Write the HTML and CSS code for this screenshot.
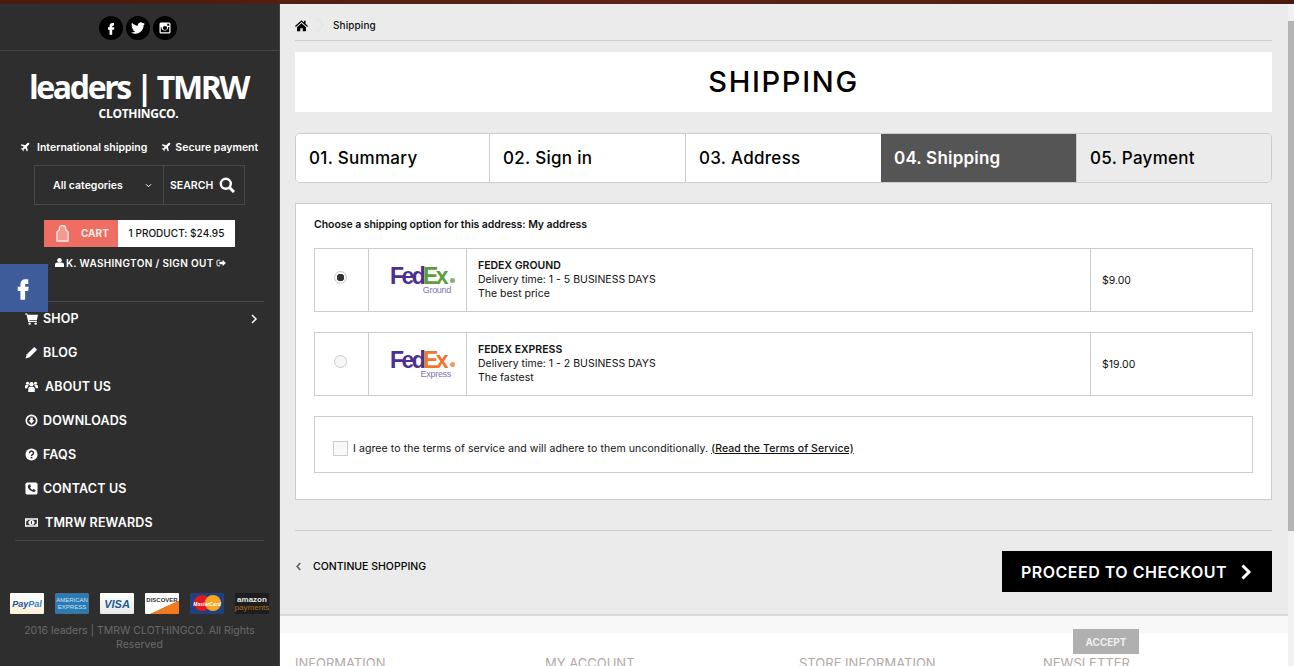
FILE: index.html
```html
<!DOCTYPE html>
<html lang="en">
<head>
<meta charset="utf-8">
<title>Shipping</title>
<link rel="stylesheet" href="styles.css">
</head>
<body>
<div class="topstrip"></div>
<div class="layout">
  <aside class="sidebar">
    <div class="socials">
      <span class="circle"><svg viewBox="0 0 24 24" width="16" height="16"><path fill="#fff" d="M14 8.5h2.500V4.500H14c-2.500 0-4.200 1.800-4.200 4.200V11H7.500v3.500h2.300V22h4v-7.500h2.600l.5-3.500h-3.100V9.300c0-.5.200-.8.700-.8z"/></svg></span>
      <span class="circle"><svg viewBox="0 0 24 24" width="14" height="14"><path fill="#fff" d="M23.953 4.57a10 10 0 01-2.825.775 4.958 4.958 0 002.163-2.723c-.951.555-2.005.959-3.127 1.184a4.92 4.92 0 00-8.384 4.482C7.69 8.095 4.067 6.13 1.64 3.162a4.822 4.822 0 00-.666 2.475c0 1.71.87 3.213 2.188 4.096a4.904 4.904 0 01-2.228-.616v.06a4.923 4.923 0 003.946 4.827 4.996 4.996 0 01-2.212.085 4.936 4.936 0 004.604 3.417 9.867 9.867 0 01-6.102 2.105c-.39 0-.779-.023-1.17-.067a13.995 13.995 0 007.557 2.209c9.053 0 13.998-7.496 13.998-13.985 0-.21 0-.42-.015-.63A9.935 9.935 0 0024 4.59z"/></svg></span>
      <span class="circle"><svg viewBox="0 0 24 24" width="12" height="12"><path fill="#fff" fill-rule="evenodd" d="M4 1h16a3 3 0 013 3v16a3 3 0 01-3 3H4a3 3 0 01-3-3V4a3 3 0 013-3zm12.500 2.500v4h4v-4zM3.500 10v10c0 .3.200.5.5.5h16c.3 0 .5-.2.5-.5V10h-2.200a6.700 6.700 0 11-13.600 0zM12 7.800a4.200 4.200 0 100 8.400 4.200 4.200 0 000-8.400z"/></svg></span>
    </div>
    <div class="brand">
      <div class="brand-name">leaders | TMRW</div>
      <div class="brand-sub">CLOTHINGCO.</div>
    </div>
    <div class="perks">
      <span class="perk perk-first"><svg class="plane" viewBox="0 0 16 16"><use href="#i-plane"/></svg>International shipping</span>
      <span class="perk"><svg class="plane" viewBox="0 0 16 16"><use href="#i-plane"/></svg>Secure payment</span>
    </div>
    <div class="searchbox">
      <div class="search-cat"><span>All categories</span><svg viewBox="0 0 8 6" width="7" height="5"><path d="M1 1.500l3 3 3-3" fill="none" stroke="#fff" stroke-width="1.200"/></svg></div>
      <div class="search-btn"><span>SEARCH</span><svg viewBox="0 0 16 16" width="16" height="16"><circle cx="6.800" cy="6.800" r="5" fill="none" stroke="#fff" stroke-width="2.400"/><path d="M10.500 10.500l4.500 4.500" stroke="#fff" stroke-width="3"/></svg></div>
    </div>
    <div class="cart">
      <div class="cart-left"><svg viewBox="0 0 14 18" width="13" height="17"><path d="M1 17V7.500L3.500 5V4a3.500 3.500 0 017 0v1l2.500 2.500V17z" fill="#f49a91" stroke="#fbe6e3" stroke-width="1.500"/></svg><span>CART</span></div>
      <div class="cart-right">1 PRODUCT: $24.95</div>
    </div>
    <div class="userline"><svg viewBox="0 0 12 12" width="9" height="9"><circle cx="6" cy="3" r="3" fill="#fff"/><path d="M0 12V9c0-2 1.500-3 3-3h6c1.500 0 3 1 3 3v3z" fill="#fff"/></svg><span>K. WASHINGTON / SIGN OUT</span><svg viewBox="0 0 12 10" width="10" height="8"><path d="M5 1.500H2a1 1 0 00-1 1v5a1 1 0 001 1h3" fill="none" stroke="#fff" stroke-width="1.200"/><path d="M4 3.500h4V1l4 4-4 4V6.500H4z" fill="#fff"/></svg></div>
    <nav class="menu">
      <a class="menu-item"><svg viewBox="0 0 14 14"><path fill="#fff" d="M0 1.500h2.500l.5 1.500h11l-1.200 5.500H4.500l.3 1h8v1.300H3.500L1.600 2.800H0z"/><circle cx="5" cy="12.500" r="1.300" fill="#fff"/><circle cx="11.500" cy="12.500" r="1.300" fill="#fff"/></svg><span class="menu-label">SHOP</span><svg class="chev" viewBox="0 0 8 10"><path d="M2 1l4 4-4 4" fill="none" stroke="#fff" stroke-width="1.500"/></svg></a>
      <a class="menu-item"><svg viewBox="0 0 14 14"><path fill="#fff" d="M10 1l3 3-8 8-4.500 1.500L2 9z"/></svg><span class="menu-label">BLOG</span></a>
      <a class="menu-item wide"><svg viewBox="0 0 14 14"><circle cx="7" cy="4.500" r="2.300" fill="#fff"/><circle cx="2.700" cy="3.500" r="1.700" fill="#fff"/><circle cx="11.300" cy="3.500" r="1.700" fill="#fff"/><path fill="#fff" d="M3.500 13V9.500c0-1.500 1-2.200 2-2.200h3c1 0 2 .7 2 2.200V13zM0 9V7c0-1 .7-1.500 1.500-1.500H4L2.500 8v1zM14 9V7c0-1-.7-1.500-1.500-1.500H10L11.500 8v1z"/></svg><span class="menu-label">ABOUT US</span></a>
      <a class="menu-item"><svg viewBox="0 0 14 14"><circle cx="7" cy="7" r="5.600" fill="none" stroke="#fff" stroke-width="1.800"/><path fill="#fff" d="M5.700 3.800h2.600v3h1.800L7 10.400 3.900 6.800h1.800z"/></svg><span class="menu-label">DOWNLOADS</span></a>
      <a class="menu-item"><svg viewBox="0 0 14 14"><circle cx="7" cy="7" r="6.500" fill="#fff"/><path d="M4.800 5.500a2.200 2 0 114 1c-.8.600-1.800 1-1.800 2.200" fill="none" stroke="#2e2e2e" stroke-width="1.600"/><rect x="6.100" y="9.500" width="1.800" height="1.700" fill="#2e2e2e"/></svg><span class="menu-label">FAQS</span></a>
      <a class="menu-item"><svg viewBox="0 0 14 14"><rect x=".5" y=".5" width="13" height="13" rx="2" fill="#fff"/><path d="M4 3l1.500-.5 1 2.500-1 1c.5 1.200 1.300 2 2.500 2.500l1-1 2.500 1-.5 1.500c-.5.800-1.800.8-3 .3C5.500 9.500 4 8 3.200 6 2.800 4.800 3.200 3.500 4 3z" fill="#2e2e2e"/></svg><span class="menu-label">CONTACT US</span></a>
      <a class="menu-item wide"><svg viewBox="0 0 14 14"><path fill="#fff" fill-rule="evenodd" d="M0 2.500h14v9H0zM1.300 4v6h11.400V4z"/><ellipse cx="7" cy="7" rx="3.300" ry="2.700" fill="#fff"/><rect x="6.400" y="5.500" width="1.200" height="3" fill="#2e2e2e"/><rect x="1.300" y="4" width="1.500" height="1.500" fill="#fff"/><rect x="11.200" y="8.500" width="1.500" height="1.500" fill="#fff"/></svg><span class="menu-label">TMRW REWARDS</span></a>
    </nav>
    <div class="cards">
      <span class="card card-paypal"><i>Pay</i><b>Pal</b></span>
      <span class="card card-amex">AMERICAN<br>EXPRESS</span>
      <span class="card card-visa">VISA</span>
      <span class="card card-discover">DISCOVER</span>
      <span class="card card-mc"><em class="mc-red"></em><em class="mc-yellow"></em><span class="mc-text">MasterCard</span></span>
      <span class="card card-amazon"><span class="az-top">amazon</span><span class="az-bot">payments</span></span>
    </div>
    <p class="copyright">2016 leaders | TMRW CLOTHINGCO. All Rights Reserved</p>
  </aside>

  <main class="main">
    <div class="content">
      <div class="breadcrumb">
        <svg viewBox="0 0 16 16" width="13" height="13"><path d="M8 1.500L0 8.500l1 1.200L8 3.700l7 6 1-1.200-3-2.600V2h-2v2.200zM2.500 10L8 5.300l5.500 4.700v5H9.500v-3.500h-3V15h-4z" fill="#000"/></svg>
        <svg class="crumb-sep" viewBox="0 0 8 16" width="8" height="16"><path d="M1 1l6 7-6 7" fill="none" stroke="#e0e0e0"/></svg>
        <span>Shipping</span>
      </div>
      <h1 class="title">SHIPPING</h1>
      <ol class="steps">
        <li class="step s1">01. Summary</li>
        <li class="step s2">02. Sign in</li>
        <li class="step s3">03. Address</li>
        <li class="step s4">04. Shipping</li>
        <li class="step s5">05. Payment</li>
      </ol>
      <section class="panel">
        <p class="choose">Choose a shipping option for this address: My address</p>
        <div class="option">
          <div class="opt-radio"><span class="radio checked"></span></div>
          <div class="opt-logo"><div class="fedex"><span class="fx-line"><span class="fed">Fed</span><span class="ex green">Ex</span><span class="dot green-dot"></span></span><span class="fx-sub">Ground</span></div></div>
          <div class="opt-text"><strong>FEDEX GROUND</strong><span>Delivery time: 1 - 5 BUSINESS DAYS</span><span>The best price</span></div>
          <div class="opt-price">$9.00</div>
        </div>
        <div class="option">
          <div class="opt-radio"><span class="radio"></span></div>
          <div class="opt-logo"><div class="fedex"><span class="fx-line"><span class="fed">Fed</span><span class="ex orange">Ex</span><span class="dot orange-dot"></span></span><span class="fx-sub">Express</span></div></div>
          <div class="opt-text"><strong>FEDEX EXPRESS</strong><span>Delivery time: 1 - 2 BUSINESS DAYS</span><span>The fastest</span></div>
          <div class="opt-price">$19.00</div>
        </div>
        <div class="terms">
          <span class="checkbox"></span>
          <span>I agree to the terms of service and will adhere to them unconditionally. <a class="terms-link">(Read the Terms of Service)</a></span>
        </div>
      </section>
      <div class="actions">
        <a class="continue"><svg viewBox="0 0 8 10" width="7" height="9"><path d="M6 1L2.500 5 6 9" fill="none" stroke="#666" stroke-width="2"/></svg><span>CONTINUE SHOPPING</span></a>
        <a class="proceed"><span>PROCEED TO CHECKOUT</span><svg viewBox="0 0 12 16" width="12" height="16"><path d="M2.500 1.500L9 8l-6.500 6.500" fill="none" stroke="#fff" stroke-width="3"/></svg></a>
      </div>
    </div>
    <footer class="footer">
      <div class="footer-band"></div>
      <div class="footer-cols">
        <span class="fc1">INFORMATION</span>
        <span class="fc2">MY ACCOUNT</span>
        <span class="fc3">STORE INFORMATION</span>
        <span class="fc4">NEWSLETTER</span>
      </div>
    </footer>
    <a class="accept">ACCEPT</a>
  </main>
  <div class="scrollbar"><div class="thumb"></div></div>
</div>
<a class="fb-tab"><svg viewBox="0 0 24 24" width="28" height="28"><path fill="#fff" d="M14 8.500h2.500V4.500H14c-2.500 0-4.200 1.800-4.200 4.200V11H7.500v3.500h2.300V22h4v-7.500h2.600l.5-3.500h-3.100V9.300c0-.5.200-.8.700-.8z"/></svg></a>
<svg class="defs" width="0" height="0"><defs><symbol id="i-plane" viewBox="0 0 16 16"><path fill="#fff" d="M14.500 1.500c-1-1-2.500 0-3.500 1L8.500 5 2.500 3.500 1 5l5 2.500L3.500 10.500l-2-.5-.5.5 2.500 2 2 2.500.5-.5-.5-2 3-2.500L11 15l1.500-1.500L11 7.500 13.500 5c1-1 2-2.500 1-3.500z"/></symbol></defs></svg>
</body>
</html>
```
FILE: styles.css
```css
* { box-sizing: border-box; }
html, body { margin: 0; padding: 0; height: 666px; overflow: hidden; }
body { font-family: Inter, "Liberation Sans", sans-serif; background: #fff; color: #000; position: relative; }
a { color: inherit; text-decoration: none; }
p, h1, ol { margin: 0; padding: 0; }
.defs { position: absolute; }
.topstrip { height: 4px; background: linear-gradient(90deg, #4a1a10, #5e2316 50%, #4a1a10); }
.layout { display: flex; height: 662px; }

/* sidebar */
.sidebar { width: 280px; flex: none; background: #2e2e2e; border-right: 1px solid #444; color: #fff; display: flex; flex-direction: column; }
.socials { height: 47px; border-bottom: 1px solid #444; display: flex; justify-content: center; gap: 3px; padding-top: 12px; padding-right: 3px; }
.circle { width: 24px; height: 24px; border-radius: 50%; background: #000; display: flex; align-items: center; justify-content: center; }
.brand { text-align: center; height: 74px; padding-top: 18px; padding-right: 2px; }
.brand-name { font-family: "Open Sans", sans-serif; font-weight: 700; font-size: 32px; line-height: 36px; letter-spacing: -2.4px; }
.brand-sub { font-family: "Open Sans", sans-serif; font-weight: 700; font-size: 12px; line-height: 14px; letter-spacing: -.3px; margin-top: 2px; }
.perks { display: flex; height: 25px; padding: 19px 0 0 20px; font-size: 10.500px; font-weight: 600; align-items: center; }
.perk { display: inline-flex; align-items: center; white-space: nowrap; }
.perk-first { margin-right: 14px; }
.plane { width: 10px; height: 10px; margin-right: 7px; }
.perk:not(.perk-first) .plane { margin-right: 4px; }
.searchbox { margin: 15px 0 0 34px; width: 211px; height: 40px; border: 1px solid #484848; display: flex; font-size: 10.500px; font-weight: 600; }
.search-cat { width: 129px; border-right: 1px solid #484848; display: flex; align-items: center; justify-content: space-between; padding: 0 11px 0 18px; }
.search-btn { flex: 1; display: flex; align-items: center; justify-content: space-between; padding: 0 9px 0 6px; }
.cart { margin: 15px 0 0 44px; width: 191px; height: 27px; display: flex; font-size: 10px; font-weight: 500; }
.cart-left { width: 74px; background: #ee6e63; display: flex; align-items: center; padding-left: 12px; gap: 12px; font-weight: 700; color: #fbeae8; }
.cart-left span { padding-bottom: 2px; }
.cart-right { flex: 1; background: #fff; color: #111; display: flex; align-items: center; justify-content: center; white-space: nowrap; padding-bottom: 2px; letter-spacing: .03px; }
.userline { margin: 9px 0 0 55px; height: 13px; display: flex; align-items: center; gap: 2px; font-size: 10px; font-weight: 600; white-space: nowrap; letter-spacing: .33px; }
.menu { margin: 32px 15px 0 15px; border-top: 1px solid #4a4a4a; border-bottom: 1px solid #4a4a4a; height: 240px; padding: 0 0 0 10px; display: flex; flex-direction: column; }
.menu-item { height: 34px; display: flex; align-items: center; font-size: 12.500px; font-weight: 600; flex: none; letter-spacing: .15px; }
.menu-item:first-child { height: 33px; }
.menu-item > svg:first-child { width: 13px; height: 13px; margin-right: 5px; flex: none; }
.menu-item.wide > svg:first-child { margin-right: 7px; }
.menu-label { flex: 1; }
.chev { width: 8px; height: 10px; margin-right: 6px; }
.cards { display: flex; gap: 11px; margin: 52px 0 0 10px; }
.card { width: 34px; height: 21px; flex: none; display: flex; align-items: center; justify-content: center; font-family: "Liberation Sans", sans-serif; overflow: hidden; position: relative; border-radius: 1px; white-space: nowrap; }
.card-paypal { background: linear-gradient(#fff, #fdf0d8); font-size: 9px; font-weight: 700; font-style: italic; color: #1f4f94; }
.card-paypal b { color: #2a8ac9; }
.card-amex { background: #2a7ab5; color: #cfe2ef; font-size: 6px; line-height: 7px; text-align: center; flex-direction: column; border: 1px solid #4b6f8c; }
.card-visa { background: linear-gradient(#fff, #e9e9e9); color: #1d5a96; font-weight: 700; font-style: italic; font-size: 11px; }
.card-discover { background: linear-gradient(155deg, #fff 62%, #f07a1c 64%); color: #333; font-size: 6px; font-weight: 700; align-items: flex-start; padding-top: 4px; }
.card-mc { background: #23407e; }
.mc-red { position: absolute; left: 4px; top: 2px; width: 16px; height: 16px; border-radius: 50%; background: #e01a22; }
.mc-yellow { position: absolute; left: 15px; top: 2px; width: 16px; height: 16px; border-radius: 50%; background: #f5a623; }
.mc-text { position: relative; color: #fff; font-size: 5px; font-weight: 700; font-style: italic; }
.card-amazon { background: #1d1d1d; flex-direction: column; line-height: 8px; }
.az-top { font-size: 8px; color: #e8e8e8; font-weight: 700; }
.az-bot { font-size: 8px; color: #a8701e; }
.copyright { margin: 10px 6px 0 6px; text-align: center; font-size: 10.500px; line-height: 14px; color: #6a6a6a; font-weight: 400; }

/* main */
.main { flex: 1; background: #ebebeb; display: flex; flex-direction: column; position: relative; min-width: 0; }
.content { padding: 0 16px 0 15px; height: 610px; flex: none; }
.breadcrumb { height: 37px; border-bottom: 1px solid #ccc; display: flex; align-items: center; padding-top: 6px; font-size: 10px; font-weight: 500; color: #111; letter-spacing: .1px; }
.crumb-sep { margin: 0 9px 0 8px; }
.title { margin-top: 11px; height: 60px; background: #fff; font-size: 29px; font-weight: 500; line-height: 60px; text-align: center; letter-spacing: 1.7px; }
.steps { list-style: none; margin-top: 21px; height: 50px; border: 1px solid #ccc; border-radius: 5px; display: flex; overflow: hidden; }
.step { display: flex; align-items: center; padding-left: 13px; padding-bottom: 1px; font-size: 17px; font-weight: 500; border-right: 1px solid #ccc; background: #fff; letter-spacing: .3px; }
.s1 { width: 194px; }
.s2 { width: 196px; }
.s3 { width: 195px; border-right: 0; }
.s4 { width: 196px; background: #555; color: #fff; font-weight: 600; border-right-color: #ccc; letter-spacing: .2px; }
.s5 { flex: 1; background: #ebebeb; border-right: 0; }
.panel { margin-top: 20px; height: 297px; background: #fff; border: 1px solid #ccc; padding: 15px 18px 0; }
.choose { font-size: 10.500px; font-weight: 600; line-height: 12px; margin-bottom: 17px; color: #111; letter-spacing: -.06px; }
.option { height: 64px; border: 1px solid #ccc; display: flex; margin-bottom: 20px; font-size: 10.500px; color: #111; }
.opt-radio { width: 54px; border-right: 1px solid #ccc; display: flex; align-items: center; justify-content: center; padding-right: 2px; padding-bottom: 5px; }
.radio { width: 13px; height: 13px; border-radius: 50%; border: 1px solid #ccc; background: #f7f7f7; display: block; }
.radio.checked { background: radial-gradient(circle, #333 0, #333 3.500px, #f7f7f7 4px); }
.opt-logo { width: 98px; border-right: 1px solid #ccc; display: flex; align-items: center; padding-left: 21px; }
.fedex { font-family: "Liberation Sans", sans-serif; display: flex; flex-direction: column; width: 66px; }
.fx-line { display: flex; align-items: flex-end; font-size: 23px; font-weight: 700; line-height: 20px; letter-spacing: -2.600px; }
.fed { color: #4d2f8f; }
.green { color: #5e9e3a; }
.orange { color: #f0762a; }
.dot { width: 5px; height: 5px; flex: none; border-radius: 50%; margin: 0 0 3px 4px; }
.green-dot { background: #7fb56a; }
.orange-dot { background: #f09a60; }
.fx-sub { font-size: 9px; color: #8273b5; line-height: 10px; text-align: right; padding-right: 5px; letter-spacing: -.3px; margin-top: -1px; }
.opt-text { width: 624px; border-right: 1px solid #ccc; padding: 10px 0 0 11px; display: flex; flex-direction: column; line-height: 14px; }
.opt-text strong { font-weight: 600; }
.opt-price { flex: 1; display: flex; align-items: center; padding-left: 11px; }
.terms { height: 57px; border: 1px solid #ccc; display: flex; align-items: center; padding: 7px 0 0 18px; font-size: 10.500px; gap: 5px; color: #111; letter-spacing: .09px; }
.checkbox { width: 15px; height: 15px; border: 1px solid #ccc; background: #f8f8f8; display: block; }
.terms-link { text-decoration: underline; font-weight: 500; }
.actions { margin-top: 30px; border-top: 1px solid #ccc; display: flex; justify-content: space-between; padding-top: 20px; }
.continue { display: flex; align-items: center; gap: 11px; font-size: 10.500px; font-weight: 500; height: 30px; }
.proceed { width: 270px; height: 41px; background: #000; color: #fff; display: flex; align-items: center; justify-content: space-between; padding: 0 20px 0 19px; font-size: 16px; font-weight: 600; white-space: nowrap; letter-spacing: .5px; }
.footer { flex: 1; background: #fff; border-top: 2px solid #d8d8d8; }
.footer-band { height: 17px; background: #f8f8f8; }
.footer-cols { display: flex; height: 20px; padding-top: 22px; font-size: 13px; line-height: 16px; color: #b5a8a8; white-space: nowrap; }
.fc1 { margin-left: 15px; width: 250px; }
.fc2 { width: 254px; }
.fc3 { width: 244px; }
.accept { position: absolute; left: 793px; top: 625px; width: 66px; height: 25px; background: #b0b0b0; color: #eee; font-size: 10px; font-weight: 700; display: flex; align-items: center; justify-content: center; }
.scrollbar { width: 6px; flex: none; background: #f1f1f1; padding-top: 17px; }
.thumb { height: 510px; background: #b4b4b4; }
.fb-tab { position: absolute; left: 0; top: 264px; width: 48px; height: 48px; background: #3f5c9a; display: flex; align-items: center; justify-content: center; padding-right: 2px; }
```
